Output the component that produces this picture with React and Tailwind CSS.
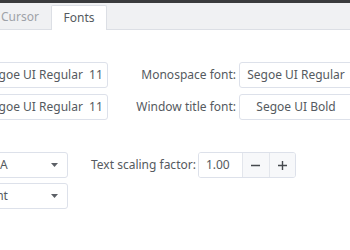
import React from "react"

const font = { fontFamily: '"Noto Sans", "Open Sans", sans-serif' }

const FontButton = ({ children, className }) => (
  <button
    className={
      "h-[26px] shrink-0 rounded-[3px] border border-[#dde1ea] bg-white text-center text-[12px] text-[#555a60] whitespace-pre " +
      className
    }
  >
    {children}
  </button>
)

const Combo = ({ value }) => (
  <div className="flex h-[26px] w-[101px] shrink-0 items-center justify-between rounded-[3px] border border-[#dde1ea] bg-white pl-[8px] pr-[9px] ml-[-33px] text-[12px] text-[#555a60]">
    <span>{value}</span>
    <svg width="7" height="4" viewBox="0 0 7 4">
      <path d="M0 0h7L3.5 4z" fill="#5c6066" />
    </svg>
  </div>
)

export default function App() {
  return (
    <div className="relative h-[250px] w-[350px] overflow-hidden bg-white" style={font}>
      <div className="h-[3px] bg-[#3a3b3d]" />

      {/* tab bar */}
      <div className="flex h-[27px] items-end border-b border-[#dcdfe5] bg-[#f0f1f3]">
        <div className="ml-[-11px] flex h-[24px] w-[62px] items-center justify-center text-[12px] text-[#9ea2a8]">
          Cursor
        </div>
        <div className="mb-[-1px] flex h-[25px] w-[56px] items-center justify-center rounded-t-[2px] border border-b-0 border-[#dcdfe5] bg-white text-[12px] text-[#555a60]">
          Fonts
        </div>
      </div>

      <div className="pt-[32px]">
        <div className="flex items-center">
          <FontButton className="ml-[-20px] w-[128px]">Segoe UI Regular  11</FontButton>
          <div className="w-[128px] shrink-0 text-right text-[12px] text-[#555a60]">Monospace font:</div>
          <FontButton className="ml-[3px] w-[114px]">Segoe UI Regular</FontButton>
        </div>
        <div className="mt-[6px] flex items-center">
          <FontButton className="ml-[-20px] w-[128px]">Segoe UI Regular  11</FontButton>
          <div className="w-[128px] shrink-0 text-right text-[12px] text-[#555a60]">Window title font:</div>
          <FontButton className="ml-[3px] w-[114px]">Segoe UI Bold</FontButton>
        </div>

        <div className="mt-[32px] flex items-center">
          <Combo value="RGBA" />
          <div className="ml-[23px] text-[12px] text-[#555a60]">Text scaling factor:</div>
          <div className="ml-[2px] flex h-[26px] w-[98px] overflow-hidden rounded-[3px] border border-[#dde1ea] text-[12px] text-[#555a60]">
            <div className="flex w-[44px] items-center pl-[7px] bg-white">1.00</div>
            <button className="flex w-[27px] items-center justify-center border-l border-[#e3e6ec] bg-[#f7f8fa]">
              <svg width="9" height="9" viewBox="0 0 9 9">
                <path d="M0 4.5h9" stroke="#45494e" strokeWidth="1.4" />
              </svg>
            </button>
            <button className="flex w-[27px] items-center justify-center border-l border-[#e3e6ec] bg-[#f7f8fa]">
              <svg width="9" height="9" viewBox="0 0 9 9">
                <path d="M0 4.5h9M4.5 0v9" stroke="#45494e" strokeWidth="1.4" />
              </svg>
            </button>
          </div>
        </div>
        <div className="mt-[5px] flex items-center">
          <Combo value="Slight" />
        </div>
      </div>
    </div>
  )
}
